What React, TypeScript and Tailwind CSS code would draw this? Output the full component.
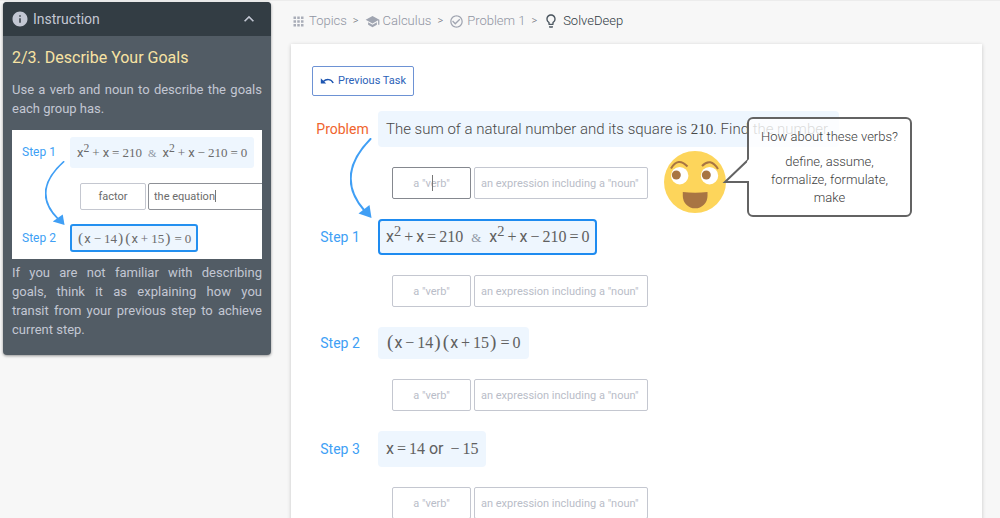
import React from "react";
import {
  MdApps,
  MdSchool,
  MdCheckCircleOutline,
  MdLightbulbOutline,
  MdInfo,
  MdExpandLess,
} from "react-icons/md";

function Num({ children }: { children: React.ReactNode }) {
  return <span className="font-['Liberation_Serif',serif]">{children}</span>;
}

function Paren({ children }: { children: React.ReactNode }) {
  return <span className="mx-px font-['Liberation_Serif',serif] text-[1.2em] leading-none">{children}</span>;
}

function Op({ children }: { children: React.ReactNode }) {
  return <span className="mx-[3px] font-['Liberation_Serif',serif]">{children}</span>;
}

function Squared() {
  return (
    <span>
      x
      <sup className="relative -top-[0.4em] align-baseline font-['Liberation_Serif',serif] text-[0.9em] leading-none">
        2
      </sup>
    </span>
  );
}

function QuadraticPair({ compact = false }: { compact?: boolean }) {
  return (
    <span className="whitespace-nowrap">
      <Squared />
      <Op>+</Op>x<Op>=</Op>
      <Num>210</Num>
      <span
        className={
          compact
            ? "mx-[6px] font-['Liberation_Serif',serif] text-[11px] text-[#8f96a4]"
            : "mx-2 font-['Liberation_Serif',serif] text-[13px] text-[#8f96a4]"
        }
      >
        &amp;
      </span>
      <Squared />
      <Op>+</Op>x<Op>−</Op>
      <Num>210</Num>
      <Op>=</Op>
      <Num>0</Num>
    </span>
  );
}

function Factored() {
  return (
    <span className="whitespace-nowrap">
      <Paren>(</Paren>x<Op>−</Op>
      <Num>14</Num>
      <Paren>)</Paren>
      <Paren>(</Paren>x<Op>+</Op>
      <Num>15</Num>
      <Paren>)</Paren>
      <Op>=</Op>
      <Num>0</Num>
    </span>
  );
}

function CurvedArrow({ className }: { className: string }) {
  return (
    <svg viewBox="0 0 22 80" className={className} fill="none" preserveAspectRatio="none" aria-hidden="true">
      <path d="M20.5 1C-4 26-5 50 14 72" stroke="#409ff5" strokeWidth="2" strokeLinecap="round" />
      <path d="M8.5 75.5 19.5 67 21.5 80Z" fill="#409ff5" />
    </svg>
  );
}

function Undo() {
  return (
    <svg viewBox="0 0 14 10" className="h-[10px] w-[14px]" fill="none" aria-hidden="true">
      <path d="M0.800 2.200V7.600H6.200Z" fill="#1d55b0" />
      <path d="M3 5.800C6.500 2.600 11 2.800 13.200 7" stroke="#1d55b0" strokeWidth="1.5" />
    </svg>
  );
}

function Instruction() {
  return (
    <aside className="w-[268px] shrink-0 overflow-hidden rounded-[4px] bg-[#525c65] text-[#c3c7d3] shadow-[0_1px_3px_rgba(0,0,0,0.4)]">
      <button type="button" className="flex h-[34px] w-full items-center gap-1 bg-[#333d44] pr-3 pl-2 text-[14px]">
        <MdInfo className="size-[18px]" />
        <span className="flex-1 text-left">Instruction</span>
        <MdExpandLess className="size-5" />
      </button>
      <div className="px-[9px] pt-3 pb-4 text-justify text-[13px] leading-[19px]">
        <h2 className="mb-3 text-left text-[16px] leading-5 text-[#f8e3a3]">2/3. Describe Your Goals</h2>
        <p>Use a verb and noun to describe the goals each group has.</p>
        <figure className="relative mt-3 mb-1 flex h-[129px] flex-col overflow-hidden bg-white pt-[7px] pl-[10px] text-left text-[13px] text-[#6b6b6b]">
          <div className="flex items-center">
            <span className="w-12 text-[12px] text-[#409ff5]">Step 1</span>
            <span className="flex h-[31px] items-center rounded-[3px] bg-[#eef6fe] px-[7px]">
              <QuadraticPair compact />
            </span>
          </div>
          <div className="mt-[15px] ml-[58px] flex gap-[2px] text-[11px]">
            <input
              aria-label="Example verb"
              defaultValue="factor"
              className="h-[27px] w-[66px] shrink-0 rounded-[2px] border border-[#c4c7d0] text-center"
            />
            <input
              aria-label="Example noun"
              defaultValue="the equation"
              className="h-[27px] w-[130px] shrink-0 rounded-[2px] border border-[#8d9096] pl-[5px]"
            />
          </div>
          <div className="mt-[14px] flex items-center">
            <span className="w-12 text-[12px] text-[#409ff5]">Step 2</span>
            <span className="flex h-[28px] items-center rounded-[3px] border-2 border-[#2490f0] bg-[#eef6fe] px-[5px]">
              <Factored />
            </span>
          </div>
          <span className="absolute top-[60px] left-[203px] h-3 w-px bg-[#777]" />
          <CurvedArrow className="absolute top-[31px] left-[33px] h-[64px] w-[20px]" />
        </figure>
        <p>
          If you are not familiar with describing goals, think it as explaining how you transit{"\u00a0"}from your
          previous step to achieve current step.
        </p>
      </div>
    </aside>
  );
}

function Separator() {
  return <span className="px-[6px] text-[11px] text-[#70757d]">&gt;</span>;
}

function Breadcrumb() {
  return (
    <nav aria-label="Breadcrumb" className="flex h-[42px] items-center pb-1 text-[13px] font-light text-[#8f94a2]">
      <a href="#topics" className="flex items-center gap-[3px]">
        <MdApps className="size-[15px] text-[#a9adb8]" />
        Topics
      </a>
      <Separator />
      <a href="#calculus" className="flex items-center gap-[3px]">
        <MdSchool className="size-[15px] text-[#a0a5b1]" />
        Calculus
      </a>
      <Separator />
      <a href="#problem-1" className="flex items-center gap-[3px]">
        <MdCheckCircleOutline className="size-[15px] text-[#a0a5b1]" />
        Problem 1
      </a>
      <Separator />
      <a href="#solvedeep" className="flex items-center gap-1 font-light text-[#2f3a43]">
        <MdLightbulbOutline className="size-4 text-[#4c5760]" />
        SolveDeep
      </a>
    </nav>
  );
}

const boxStyles = {
  problem: "flex h-9 items-center rounded-[4px] bg-[#eef6fe] px-2 text-[15px] font-light whitespace-nowrap text-[#484848]",
  active: "flex h-9 items-center rounded-[4px] border-2 border-[#1e8bf0] bg-[#eef6fe] px-[6px] text-[16px]",
  step: "flex h-9 items-center rounded-[4px] bg-[#eef6fe] px-2 text-[16px] whitespace-nowrap",
  short: "flex h-8 items-center rounded-[4px] bg-[#eef6fe] px-2 text-[16px] whitespace-nowrap",
};

function Step({
  label,
  children,
  tone = "step",
}: {
  label: string;
  children: React.ReactNode;
  tone?: keyof typeof boxStyles;
}) {
  return (
    <div className="flex items-center">
      <span
        className={
          tone === "problem"
            ? "w-[66px] pr-[5px] text-center text-[14px] text-[#f0642d]"
            : "w-[66px] pr-[10px] text-center text-[14px] text-[#409ff5]"
        }
      >
        {label}
      </span>
      <span className={boxStyles[tone]}>{children}</span>
    </div>
  );
}

function GoalInputs({ id, active = false }: { id: string; active?: boolean }) {
  return (
    <div className="relative ml-[80px] flex gap-[3px] text-[11px] text-[#606060]">
      <input
        aria-label={`Verb for ${id}`}
        placeholder={'a "verb"'}
        className={
          active
            ? "h-8 w-[79px] rounded-[2px] border border-[#85888f] text-center placeholder:text-[#b9bdc8]"
            : "h-8 w-[79px] rounded-[2px] border border-[#c4c7d0] text-center placeholder:text-[#b9bdc8]"
        }
      />
      <input
        aria-label={`Noun for ${id}`}
        placeholder={'an expression including a "noun"'}
        className="h-8 w-[174px] rounded-[2px] border border-[#c4c7d0] px-[6px] placeholder:text-[#b9bdc8]"
      />
      {active && <span className="absolute top-2 left-[40px] h-4 w-px bg-[#777]" />}
    </div>
  );
}

function Helper() {
  return (
    <div className="absolute top-[6px] left-[352px] flex items-start">
      <svg viewBox="0 0 62 62" className="mt-[34px] size-[62px]" aria-hidden="true">
        <circle cx="31" cy="31" r="31" fill="#fdd55b" />
        <circle cx="15.7" cy="24.7" r="8.7" fill="#fff" />
        <circle cx="45.5" cy="24.7" r="8.7" fill="#fff" />
        <circle cx="12.3" cy="24" r="4.5" fill="#a87543" />
        <circle cx="42.3" cy="24" r="4.5" fill="#a87543" />
        <path d="M7 17.500Q14 5.500 23.500 15.500M38 15Q46.500 6 54 18" fill="none" stroke="#a87543" strokeWidth="2" />
        <path d="M18.800 41Q31 42.500 43.500 41V45A12.300 12.300 0 0 1 18.800 45Z" fill="#a87543" />
      </svg>
      <div className="relative ml-[21px] w-[165px] rounded-[6px] border-2 border-[#636363] bg-white/80 px-3 pt-[9px] pb-2 text-center text-[13px] leading-[18px] font-light text-[#404040]">
        <svg viewBox="0 0 28 28" className="absolute top-[38px] -left-[27px] size-7" aria-hidden="true">
          <path d="M27 2 3 25H27Z" fill="#fff" />
          <path d="M26 0V3L3 25H26V28" fill="none" stroke="#636363" strokeWidth="2" />
          <path d="M25 4.500V24H28V2.500H26.500Z" fill="#fff" />
        </svg>
        <p className="whitespace-nowrap">How about these verbs?</p>
        <p className="mt-[7px]">define, assume, formalize, formulate, make</p>
      </div>
    </div>
  );
}

export default function App() {
  return (
    <div className="flex min-h-screen items-start border-t border-[#ececec] bg-[#f7f7f7] pt-px pr-[18px] pl-[3px] font-[Roboto,sans-serif]">
      <Instruction />
      <div className="ml-5 min-w-0 flex-1">
        <Breadcrumb />
        <main className="bg-white px-[21px] pt-[22px] pb-8 text-[#606060] shadow-[0_1px_4px_rgba(0,0,0,0.2)]">
          <button
            type="button"
            className="flex h-[30px] items-center gap-1 rounded-[2px] border border-[#6d92d4] px-[7px] text-[11px] text-[#2c62b8]"
          >
            <Undo />
            Previous Task
          </button>
          <div className="relative mt-[15px] flex flex-col gap-5">
            <Step label="Problem" tone="problem">
              <span>
                The sum of a natural number and its square is <Num>210</Num>. Find the number.
              </span>
            </Step>
            <GoalInputs id="problem" active />
            <Step label="Step 1" tone="active">
              <QuadraticPair />
            </Step>
            <GoalInputs id="step 1" />
            <Step label="Step 2" tone="short">
              <Factored />
            </Step>
            <GoalInputs id="step 2" />
            <Step label="Step 3">
              <span>
                x<Op>=</Op>
                <Num>14</Num> or <Op>−</Op>
                <Num>15</Num>
              </span>
            </Step>
            <GoalInputs id="step 3" />
            <CurvedArrow className="absolute top-[27px] left-[38px] h-20 w-[22px]" />
            <Helper />
          </div>
        </main>
      </div>
    </div>
  );
}
